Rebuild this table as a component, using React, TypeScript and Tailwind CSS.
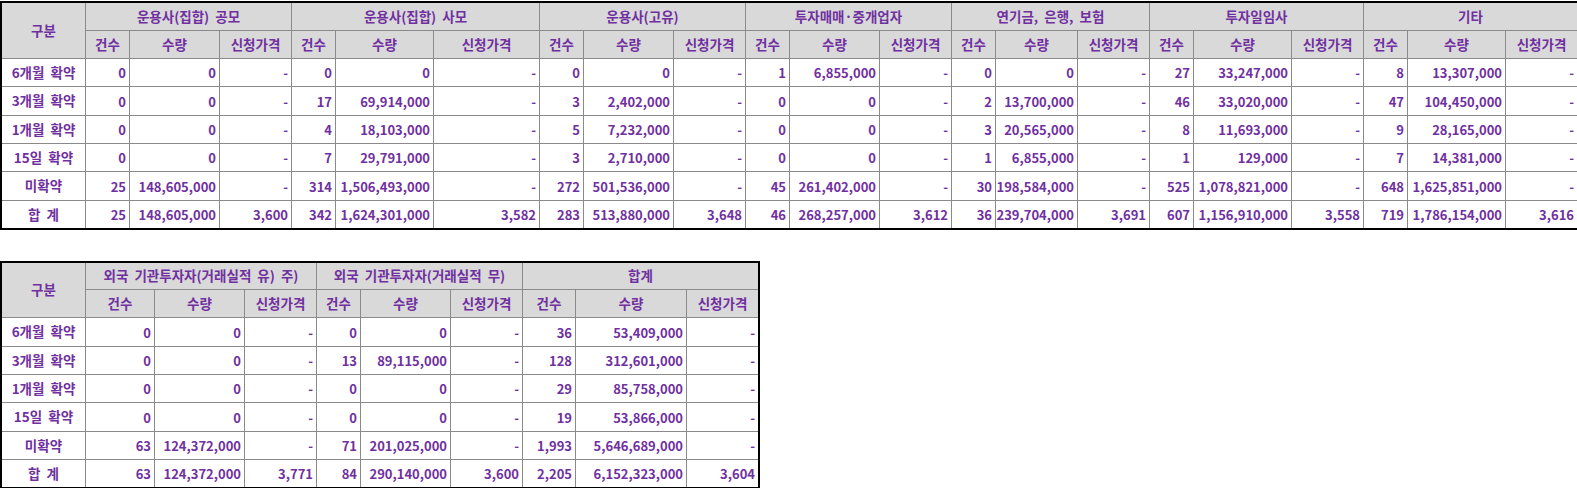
import React from "react";

const T1_COLS =
  "grid-cols-[83px_43px_89px_71px_43px_97px_105px_43px_89px_71px_43px_89px_71px_43px_81px_71px_43px_97px_71px_43px_97px_71px]";
const T1_ROWS = "grid-rows-[27px_27px_27px_28px_27px_27px_28px_27px]";
const T2_COLS = "grid-cols-[83px_68px_89px_71px_43px_89px_71px_52px_110px_71px]";
const T2_ROWS = "grid-rows-[26px_27px_28px_27px_27px_28px_27px_27px]";

const LABELS = ["6개월 확약", "3개월 확약", "1개월 확약", "15일 확약", "미확약", "합 계"];

const T1_GROUPS = [
  "운용사(집합) 공모",
  "운용사(집합) 사모",
  "운용사(고유)",
  "투자매매·중개업자",
  "연기금, 은행, 보험",
  "투자일임사",
  "기타",
];

const T1_DATA: string[][] = [
  ["0", "0", "-", "0", "0", "-", "0", "0", "-", "1", "6,855,000", "-", "0", "0", "-", "27", "33,247,000", "-", "8", "13,307,000", "-"],
  ["0", "0", "-", "17", "69,914,000", "-", "3", "2,402,000", "-", "0", "0", "-", "2", "13,700,000", "-", "46", "33,020,000", "-", "47", "104,450,000", "-"],
  ["0", "0", "-", "4", "18,103,000", "-", "5", "7,232,000", "-", "0", "0", "-", "3", "20,565,000", "-", "8", "11,693,000", "-", "9", "28,165,000", "-"],
  ["0", "0", "-", "7", "29,791,000", "-", "3", "2,710,000", "-", "0", "0", "-", "1", "6,855,000", "-", "1", "129,000", "-", "7", "14,381,000", "-"],
  ["25", "148,605,000", "-", "314", "1,506,493,000", "-", "272", "501,536,000", "-", "45", "261,402,000", "-", "30", "198,584,000", "-", "525", "1,078,821,000", "-", "648", "1,625,851,000", "-"],
  ["25", "148,605,000", "3,600", "342", "1,624,301,000", "3,582", "283", "513,880,000", "3,648", "46", "268,257,000", "3,612", "36", "239,704,000", "3,691", "607", "1,156,910,000", "3,558", "719", "1,786,154,000", "3,616"],
];

const T2_GROUPS = ["외국 기관투자자(거래실적 유) 주)", "외국 기관투자자(거래실적 무)", "합계"];

const T2_DATA: string[][] = [
  ["0", "0", "-", "0", "0", "-", "36", "53,409,000", "-"],
  ["0", "0", "-", "13", "89,115,000", "-", "128", "312,601,000", "-"],
  ["0", "0", "-", "0", "0", "-", "29", "85,758,000", "-"],
  ["0", "0", "-", "0", "0", "-", "19", "53,866,000", "-"],
  ["63", "124,372,000", "-", "71", "201,025,000", "-", "1,993", "5,646,689,000", "-"],
  ["63", "124,372,000", "3,771", "84", "290,140,000", "3,600", "2,205", "6,152,323,000", "3,604"],
];

const SUB = ["건수", "수량", "신청가격"];

function DataTable({
  cols,
  rows,
  groups,
  data,
}: {
  cols: string;
  rows: string;
  groups: string[];
  data: string[][];
}) {
  const hdr =
    "bg-[#d9d9d9] flex items-center justify-center whitespace-nowrap overflow-hidden text-[13.5px] [word-spacing:3px]";
  return (
    <div className={`grid w-max gap-px bg-[#8a8a8a] border-2 border-black ${cols} ${rows}`}>
      <div className={`${hdr} row-span-2`}>구분</div>
      {groups.map((g) => (
        <div key={g} className={`${hdr} col-span-3`}>
          {g}
        </div>
      ))}
      {groups.map((g) =>
        SUB.map((s) => (
          <div key={g + s} className={hdr}>
            {s}
          </div>
        ))
      )}
      {data.map((row, ri) => (
        <React.Fragment key={ri}>
          <div className="bg-white flex items-center justify-center whitespace-nowrap text-[13.5px] [word-spacing:3px]">
            {LABELS[ri]}
          </div>
          {row.map((v, ci) => (
            <div
              key={ci}
              className="bg-white flex items-center justify-end pr-[3px] whitespace-nowrap overflow-hidden"
            >
              {v}
            </div>
          ))}
        </React.Fragment>
      ))}
    </div>
  );
}

export default function App() {
  return (
    <div className="w-[1577px] h-[488px] overflow-hidden bg-white pt-px font-['Noto_Sans_CJK_KR','Noto_Sans',sans-serif] text-[13px] font-bold leading-none text-[#7030a0]">
      <DataTable cols={T1_COLS} rows={T1_ROWS} groups={T1_GROUPS} data={T1_DATA} />
      <div className="mt-[31px]">
        <DataTable cols={T2_COLS} rows={T2_ROWS} groups={T2_GROUPS} data={T2_DATA} />
      </div>
    </div>
  );
}
